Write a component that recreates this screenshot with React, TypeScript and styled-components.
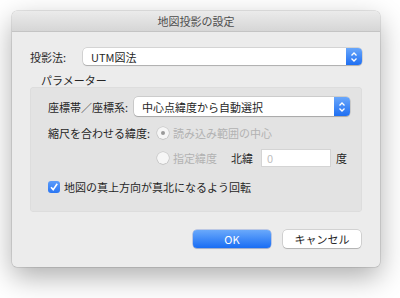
import styled, { createGlobalStyle } from 'styled-components'

const Global = createGlobalStyle`
    html, body {
        margin: 0;
        padding: 0;
        background: #ffffff;
    }
    body {
        width: 400px;
        height: 298px;
        overflow: hidden;
        font-family: 'Noto Sans CJK JP', 'Liberation Sans', sans-serif;
        font-size: 11px;
        color: #262626;
    }
`

const Page = styled.div`
    width: 400px;
    height: 298px;
    padding: 11px 0 0 12px;
    box-sizing: border-box;
`

const Window = styled.div`
    width: 368px;
    height: 256px;
    background: #ececec;
    border-radius: 5px;
    box-shadow: 0 0 0 0.5px rgba(0, 0, 0, 0.18), 0 10px 28px rgba(0, 0, 0, 0.32);
    overflow: hidden;
    display: flex;
    flex-direction: column;
`

const TitleBar = styled.header`
    height: 20px;
    flex: none;
    display: flex;
    align-items: center;
    justify-content: center;
    background: linear-gradient(to bottom, #ebebeb, #d6d6d6);
    border-bottom: 1px solid #c4c4c4;
    color: #4d4d4d;
    font-size: 11px;
`

const Content = styled.div`
    padding: 16px 18px 0 18px;
    display: flex;
    flex-direction: column;
`

const Row = styled.div<{ gap?: number }>`
    display: flex;
    align-items: center;
    gap: ${(p) => p.gap ?? 0}px;
`

const Label = styled.span<{ width: number; dim?: boolean }>`
    width: ${(p) => p.width}px;
    flex: none;
    line-height: 16px;
    color: ${(p) => (p.dim ? '#b2b2b2' : '#262626')};
    white-space: nowrap;
`

const Popup = styled.div<{ height: number }>`
    flex: 1;
    height: ${(p) => p.height}px;
    display: flex;
    align-items: center;
    background: #ffffff;
    border-radius: 4px;
    box-shadow: 0 0 0 0.5px rgba(0, 0, 0, 0.2), 0 1px 1px rgba(0, 0, 0, 0.18);
    overflow: hidden;
`

const PopupText = styled.span`
    flex: 1;
    padding-left: 8px;
    white-space: nowrap;
`

const Stepper = styled.div`
    width: 16px;
    height: 100%;
    flex: none;
    display: flex;
    align-items: center;
    justify-content: center;
    background: linear-gradient(to bottom, #69a7fb, #1f6ff2);
`

const SectionTitle = styled.div`
    margin: 8px 0 0 11px;
    line-height: 14px;
`

const Group = styled.section`
    height: 125px;
    box-sizing: border-box;
    padding: 10px 12px 0 18px;
    background: #e3e3e3;
    border-radius: 4px;
    box-shadow: inset 0 0 0 0.5px rgba(0, 0, 0, 0.05);
    display: flex;
    flex-direction: column;
`

const Radio = styled.span<{ checked?: boolean }>`
    width: 12px;
    height: 12px;
    flex: none;
    border-radius: 50%;
    background: #f6f6f6;
    box-shadow: 0 0 0 0.5px rgba(0, 0, 0, 0.15), 0 0.5px 1px rgba(0, 0, 0, 0.12);
    display: flex;
    align-items: center;
    justify-content: center;
    &::after {
        content: '';
        width: 4px;
        height: 4px;
        border-radius: 50%;
        background: ${(p) => (p.checked ? '#9a9a9a' : 'transparent')};
    }
`

const Field = styled.div`
    width: 73px;
    height: 18px;
    box-sizing: border-box;
    padding-left: 5px;
    background: #ffffff;
    border: 1px solid #d4d4d4;
    color: #c0c0c0;
    line-height: 16px;
`

const CheckBox = styled.span`
    width: 12px;
    height: 12px;
    flex: none;
    border-radius: 3px;
    background: linear-gradient(to bottom, #5c9cfa, #2a76f3);
    display: flex;
    align-items: center;
    justify-content: center;
`

const Buttons = styled.div`
    display: flex;
    justify-content: flex-end;
    gap: 12px;
    margin-top: 18px;
    padding-right: 1px;
`

const Button = styled.button<{ primary?: boolean }>`
    width: 78px;
    height: 18px;
    padding: 0;
    border: none;
    border-radius: 4px;
    font-family: inherit;
    font-size: 11px;
    line-height: 18px;
    color: ${(p) => (p.primary ? '#ffffff' : '#262626')};
    background: ${(p) =>
        p.primary ? 'linear-gradient(to bottom, #6aa9fb, #196df4)' : '#ffffff'};
    box-shadow: ${(p) =>
        p.primary
            ? '0 0 0 0.5px rgba(0, 60, 200, 0.4), 0 1px 1px rgba(0, 0, 0, 0.15)'
            : '0 0 0 0.5px rgba(0, 0, 0, 0.22), 0 1px 1px rgba(0, 0, 0, 0.15)'};
`

const Chevrons = () => (
    <svg width="8" height="12" viewBox="0 0 8 12" fill="none">
        <path d="M1.5 4.5 L4 2 L6.5 4.5" stroke="#fff" strokeWidth="1.3" />
        <path d="M1.5 7.5 L4 10 L6.5 7.5" stroke="#fff" strokeWidth="1.3" />
    </svg>
)

const Check = () => (
    <svg width="10" height="10" viewBox="0 0 10 10" fill="none">
        <path d="M2 5.2 L4.2 7.6 L8.2 1.8" stroke="#fff" strokeWidth="1.6" />
    </svg>
)

export default function App() {
    return (
        <Page>
            <Global />
            <Window>
                <TitleBar>地図投影の設定</TitleBar>
                <Content>
                    <Row>
                        <Label width={53}>投影法:</Label>
                        <Popup height={17}>
                            <PopupText>UTM図法</PopupText>
                            <Stepper>
                                <Chevrons />
                            </Stepper>
                        </Popup>
                    </Row>
                    <SectionTitle>パラメーター</SectionTitle>
                    <Group>
                        <Row>
                            <Label width={86}>座標帯／座標系:</Label>
                            <Popup height={19}>
                                <PopupText>中心点緯度から自動選択</PopupText>
                                <Stepper>
                                    <Chevrons />
                                </Stepper>
                            </Popup>
                        </Row>
                        <Row style={{ marginTop: 9 }}>
                            <Label width={109}>縮尺を合わせる緯度:</Label>
                            <Radio checked />
                            <Label width={100} dim style={{ marginLeft: 4 }}>
                                読み込み範囲の中心
                            </Label>
                        </Row>
                        <Row style={{ marginTop: 8 }}>
                            <Label width={109} />
                            <Radio />
                            <Label width={58} dim style={{ marginLeft: 4 }}>
                                指定緯度
                            </Label>
                            <Label width={30}>北緯</Label>
                            <Field>0</Field>
                            <Label width={14} style={{ marginLeft: 5 }}>
                                度
                            </Label>
                        </Row>
                        <Row style={{ marginTop: 12 }} gap={4}>
                            <CheckBox>
                                <Check />
                            </CheckBox>
                            <Label width={200}>地図の真上方向が真北になるよう回転</Label>
                        </Row>
                    </Group>
                    <Buttons>
                        <Button primary>OK</Button>
                        <Button>キャンセル</Button>
                    </Buttons>
                </Content>
            </Window>
        </Page>
    )
}
